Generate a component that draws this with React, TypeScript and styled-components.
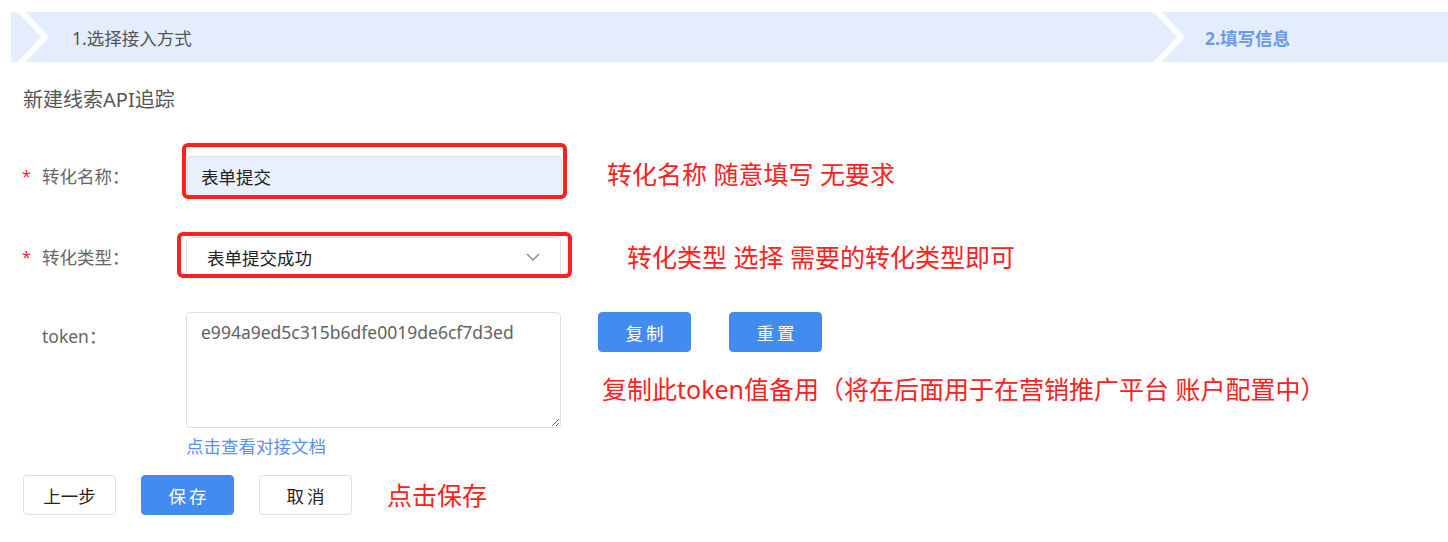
import styled, { createGlobalStyle } from "styled-components";

const GlobalStyle = createGlobalStyle`
  body {
    margin: 0;
    background: #fff;
    font-family: "Noto Sans", "Noto Sans CJK SC", sans-serif;
  }
`;

const Page = styled.div`
  padding: 12px 0 0 11px;
`;

const StepBar = styled.div`
  display: flex;
  height: 50px;
  background: #e4edfc;
`;

const Step = styled.div<{ $width?: number }>`
  display: flex;
  align-items: center;
  flex: ${(p) => (p.$width ? `0 0 ${p.$width}px` : "1")};
  height: 100%;
`;

const Chevron = styled.svg`
  flex: none;
  width: 44px;
  height: 50px;
`;

const StepLabel = styled.span<{ $active?: boolean; $gap: number }>`
  margin-left: ${(p) => p.$gap}px;
  font-size: 17.5px;
  font-weight: ${(p) => (p.$active ? 700 : 400)};
  color: ${(p) => (p.$active ? "#6a9be6" : "#555")};
`;

const Content = styled.div`
  padding-left: 11px;
`;

const Title = styled.div`
  margin-top: 26px;
  line-height: 24px;
  font-size: 20px;
  color: #555;
  padding-left: 1px;
`;

const Row = styled.div<{ $mt: number; $top?: boolean }>`
  display: flex;
  align-items: ${(p) => (p.$top ? "flex-start" : "center")};
  margin-top: ${(p) => p.$mt}px;
`;

const Label = styled.div<{ $pt?: number }>`
  flex: 0 0 164px;
  display: flex;
  align-items: center;
  padding-top: ${(p) => p.$pt || 0}px;
  line-height: 24px;
  font-size: 17.5px;
  color: #666;
`;

const Star = styled.span`
  width: 20px;
  color: #f5222d;
  font-size: 16px;
`;

const Control = styled.div`
  position: relative;
  display: flex;
  flex-direction: column;
  width: 375px;
`;

const TextInput = styled.input`
  box-sizing: border-box;
  width: 100%;
  height: 40px;
  margin-left: 1px;
  padding: 0 13px;
  border: 1px solid #dcdfe6;
  border-radius: 4px;
  background: #e8f0fe;
  font: inherit;
  font-size: 17.5px;
  color: #222;
  outline: none;
`;

const SelectBox = styled.div`
  box-sizing: border-box;
  display: flex;
  align-items: center;
  justify-content: space-between;
  height: 40px;
  padding: 0 20px;
  border: 1px solid #dcdfe6;
  border-radius: 4px;
  background: #fff;
  font-size: 17.5px;
  color: #222;
`;

const TokenArea = styled.textarea`
  box-sizing: border-box;
  width: 100%;
  height: 116px;
  padding: 7px 14px;
  border: 1px solid #dcdfe6;
  border-radius: 4px;
  font: inherit;
  font-size: 17.5px;
  color: #606266;
  resize: vertical;
  outline: none;
`;

const DocLink = styled.a`
  margin-top: 7px;
  line-height: 22px;
  font-size: 17.5px;
  color: #5b8ff2;
  text-decoration: none;
  cursor: pointer;
`;

const Highlight = styled.div<{ $t: number; $r: number; $b: number; $l: number }>`
  position: absolute;
  top: ${(p) => p.$t}px;
  right: ${(p) => p.$r}px;
  bottom: ${(p) => p.$b}px;
  left: ${(p) => p.$l}px;
  border: 4px solid #ff1f1f;
  border-radius: 6px;
  pointer-events: none;
`;

const Note = styled.div<{ $ml?: number; $mt?: number }>`
  margin-left: ${(p) => p.$ml || 0}px;
  margin-top: ${(p) => p.$mt || 0}px;
  line-height: 34px;
  font-size: 25px;
  color: #ff2020;
  white-space: nowrap;
`;

const Side = styled.div`
  display: flex;
  flex-direction: column;
  margin-left: 37px;
`;

const ButtonRow = styled.div<{ $gap: number }>`
  display: flex;
  align-items: center;
  gap: ${(p) => p.$gap}px;
`;

const Button = styled.button<{ $primary?: boolean; $spaced?: boolean }>`
  box-sizing: border-box;
  width: 93px;
  height: 40px;
  padding: 0 0 0 ${(p) => (p.$spaced ? 3 : 0)}px;
  border: 1px solid ${(p) => (p.$primary ? "#428bef" : "#dcdfe6")};
  border-radius: 4px;
  background: ${(p) => (p.$primary ? "#428bef" : "#fff")};
  color: ${(p) => (p.$primary ? "#fff" : "#222")};
  font-family: inherit;
  font-size: 17.5px;
  letter-spacing: ${(p) => (p.$spaced ? 3 : 0)}px;
  cursor: pointer;
`;

const BottomRow = styled.div`
  display: flex;
  align-items: center;
  margin-top: 18px;
  padding-left: 1px;
`;

function StepChevron() {
  return (
    <Chevron viewBox="0 0 44 50">
      <polyline points="8,-3 34,25 8,53" fill="none" stroke="#fff" strokeWidth="6" />
    </Chevron>
  );
}

export default function App() {
  return (
    <Page>
      <GlobalStyle />
      <StepBar>
        <Step $width={1136}>
          <StepChevron />
          <StepLabel $gap={17}>1.选择接入方式</StepLabel>
        </Step>
        <Step>
          <StepChevron />
          <StepLabel $gap={14} $active>
            2.填写信息
          </StepLabel>
        </Step>
      </StepBar>
      <Content>
        <Title>新建线索API追踪</Title>

        <Row $mt={44}>
          <Label>
            <Star>*</Star>转化名称：
          </Label>
          <Control>
            <TextInput defaultValue="表单提交" readOnly />
            <Highlight $t={-13} $r={-6} $b={-3} $l={-4} />
          </Control>
          <Note $ml={46} $mt={-5}>
            转化名称 随意填写 无要求
          </Note>
        </Row>

        <Row $mt={41}>
          <Label>
            <Star>*</Star>转化类型：
          </Label>
          <Control>
            <SelectBox>
              <span>表单提交成功</span>
              <svg width="14" height="8" viewBox="0 0 14 8">
                <polyline points="1,1 7,7 13,1" fill="none" stroke="#888" strokeWidth="1.3" />
              </svg>
            </SelectBox>
            <Highlight $t={-5} $r={-11} $b={-1} $l={-9} />
          </Control>
          <Note $ml={66}>转化类型 选择 需要的转化类型即可</Note>
        </Row>

        <Row $mt={35} $top>
          <Label $pt={12}>
            <Star />token：
          </Label>
          <Control>
            <TokenArea defaultValue="e994a9ed5c315b6dfe0019de6cf7d3ed" readOnly />
            <DocLink>点击查看对接文档</DocLink>
          </Control>
          <Side>
            <ButtonRow $gap={38}>
              <Button $primary $spaced>复制</Button>
              <Button $primary $spaced>重置</Button>
            </ButtonRow>
            <Note $ml={4} $mt={20}>
              复制此token值备用（将在后面用于在营销推广平台 账户配置中）
            </Note>
          </Side>
        </Row>

        <BottomRow>
          <ButtonRow $gap={25}>
            <Button>上一步</Button>
            <Button $primary $spaced>保存</Button>
            <Button $spaced>取消</Button>
          </ButtonRow>
          <Note $ml={35}>点击保存</Note>
        </BottomRow>
      </Content>
    </Page>
  );
}
